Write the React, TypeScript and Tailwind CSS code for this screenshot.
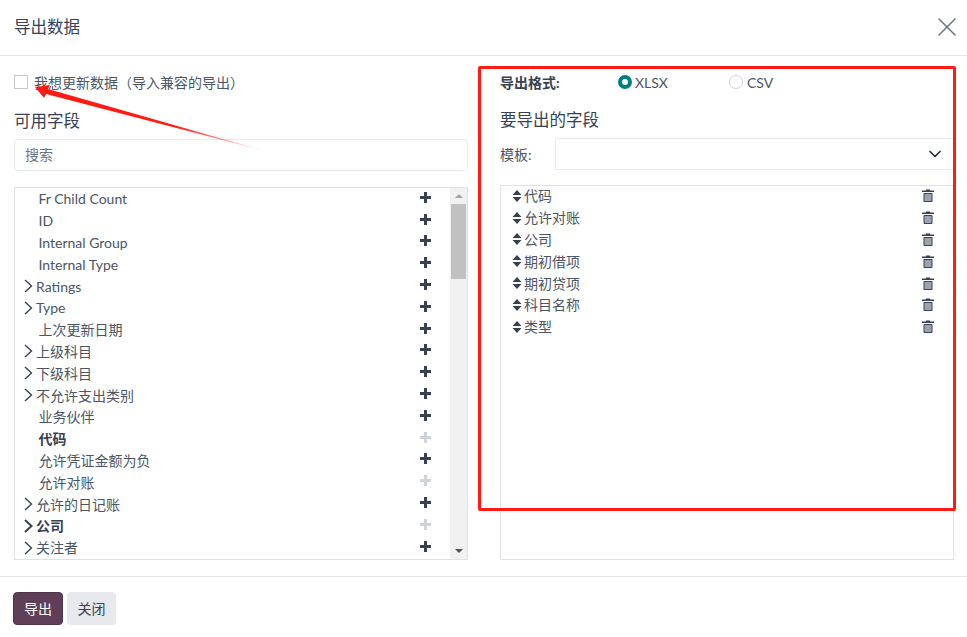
import { ChevronDown, X } from 'lucide-react'

const available = [
  { name: 'Fr Child Count' },
  { name: 'ID' },
  { name: 'Internal Group' },
  { name: 'Internal Type' },
  { name: 'Ratings', expand: true },
  { name: 'Type', expand: true },
  { name: '上次更新日期' },
  { name: '上级科目', expand: true },
  { name: '下级科目', expand: true },
  { name: '不允许支出类别', expand: true },
  { name: '业务伙伴' },
  { name: '代码', bold: true, added: true },
  { name: '允许凭证金额为负' },
  { name: '允许对账', added: true },
  { name: '允许的日记账', expand: true },
  { name: '公司', expand: true, bold: true, added: true },
  { name: '关注者', expand: true },
]

const selected = ['代码', '允许对账', '公司', '期初借项', '期初贷项', '科目名称', '类型']

function PlusIcon({ muted }: { muted?: boolean }) {
  return (
    <svg width="11" height="11" viewBox="0 0 11 11" className={`-mt-[3px] ${muted ? 'text-[#ced4da]' : 'text-[#374151]'}`}>
      <path d="M4 0h3v4h4v3H7v4H4V7H0V4h4z" fill="currentColor" />
    </svg>
  )
}

function SortIcon() {
  return (
    <svg width="10" height="12" viewBox="0 0 10 12" className="text-[#374151] shrink-0">
      <path d="M5 0l4.5 5H.5zM5 12L.5 7h9z" fill="currentColor" />
    </svg>
  )
}

function TrashIcon() {
  return (
    <svg width="12" height="13" viewBox="0 0 12 13" className="text-[#374151]">
      <path d="M4 1.5V.5h4v1h4V3H0V1.5z" fill="currentColor" />
      <path d="M2 4.5h8v8H2z" fill="#9ca3af" stroke="currentColor" />
    </svg>
  )
}

function Caret({ bold }: { bold?: boolean }) {
  return (
    <svg width="9" height="14" viewBox="0 0 9 14" fill="none" stroke="currentColor" strokeWidth={bold ? 2 : 1.4} className="text-[#374151]">
      <path d="M1 1l6.5 6L1 13" />
    </svg>
  )
}

export default function App() {
  return (
    <div className="relative w-[967px] h-[637px] bg-white overflow-hidden text-[14px] text-[#4b5563] font-['Lato','Noto_Sans_CJK_SC',sans-serif]">
      {/* Header */}
      <div className="h-[56px] flex items-center justify-between pl-[14px] pr-[4px] border-b border-[#e5e7eb]">
        <h4 className="text-[16.5px] text-[#374151]">导出数据</h4>
        <X className="w-[32px] h-[32px] -mt-[2px] text-[#6b7280]" strokeWidth={1.1} />
      </div>

      {/* Body */}
      <div className="h-[520px] grid grid-cols-[454px_454px] gap-x-[32px] pl-[14px]">
        {/* Left column */}
        <div className="flex flex-col">
          <label className="mt-[15px] h-[22px] flex items-center gap-[6px]">
            <span className="w-[14px] h-[14px] border border-[#c4c8cf] bg-white" />
            <span>我想更新数据（导入兼容的导出）</span>
          </label>
          <div className="mt-[16px] h-[24px] leading-[24px] text-[16.5px] text-[#374151]">可用字段</div>
          <div className="mt-[6px] h-[32px] flex items-center px-[10px] pb-[1px] border border-[#e9ecef] rounded-[4px] text-[#6b7280]">搜索</div>
          <div className="mt-[16px] h-[373px] flex border border-[#dee2e6] overflow-hidden">
            <div className="flex-1">
              {available.map((item) => (
                <div key={item.name} className="h-[21.8px] flex items-center pl-[9px] pr-[19px]">
                  <span className="w-[12px] shrink-0 flex">
                    {item.expand && <Caret bold={item.bold} />}
                  </span>
                  <span className={`flex-1 ${item.expand ? '' : 'pl-[2.5px]'} ${item.bold ? 'font-bold text-[#374151]' : ''}`}>{item.name}</span>
                  <PlusIcon muted={item.added} />
                </div>
              ))}
            </div>
            <div className="w-[17px] bg-[#f1f1f1] flex flex-col items-center justify-between">
              <div className="w-full flex flex-col items-center">
                <div className="h-[16px] flex items-center">
                  <div className="w-0 h-0 border-x-[4px] border-x-transparent border-b-[4px] border-b-[#a3a3a3]" />
                </div>
                <div className="w-full h-[75px] px-px"><div className="w-full h-full bg-[#c1c1c1]" /></div>
              </div>
              <div className="h-[17px] flex items-center">
                <div className="w-0 h-0 border-x-[4px] border-x-transparent border-t-[4px] border-t-[#505050]" />
              </div>
            </div>
          </div>
        </div>

        {/* Right column */}
        <div className="flex flex-col">
          <div className="mt-[15px] h-[22px] flex items-center">
            <span className="w-[118px] font-bold text-[#374151]">导出格式:</span>
            <span className="w-[14px] h-[14px] rounded-full border-[4px] border-[#017e84] bg-white" />
            <span className="ml-[3px] w-[94px]">XLSX</span>
            <span className="w-[14px] h-[14px] rounded-full border border-[#ced4da] bg-white" />
            <span className="ml-[4px]">CSV</span>
          </div>
          <div className="mt-[15px] h-[24px] leading-[24px] text-[16.5px] text-[#374151]">要导出的字段</div>
          <div className="mt-[6px] h-[32px] flex items-center">
            <span className="w-[55px]">模板:</span>
            <div className="flex-1 h-full flex items-center justify-end pr-[8px] border border-[#e9ecef] rounded-l-[2px]">
              <ChevronDown className="w-[20px] h-[20px] text-[#1f2937]" strokeWidth={2} />
            </div>
          </div>
          <div className="mt-[15px] h-[375px] border border-[#dee2e6]">
            {selected.map((name) => (
              <div key={name} className="h-[21.8px] -mt-px mb-px flex items-center pl-[11px] pr-[19px]">
                <SortIcon />
                <span className="flex-1 ml-[2px]">{name}</span>
                <TrashIcon />
              </div>
            ))}
          </div>
        </div>
      </div>

      {/* Footer */}
      <div className="h-[61px] flex items-start gap-[4px] pl-[13px] pt-[15px] border-t border-[#e5e7eb]">
        <button className="h-[33px] w-[50px] rounded-[4px] bg-[#5f3f58] text-white border border-[#4f3349]">导出</button>
        <button className="h-[33px] w-[49px] rounded-[4px] bg-[#e7e9ed] text-[#374151]">关闭</button>
      </div>

      {/* Red annotations over the screenshot */}
      <div className="absolute left-[478px] top-[66px] w-[478px] h-[445px] border-[3px] border-[#ff1a13] rounded-[2px] pointer-events-none" />
      <svg className="absolute left-0 top-0 pointer-events-none" width="300" height="170">
        <defs>
          <linearGradient id="tail" x1="35" y1="87" x2="265" y2="151" gradientUnits="userSpaceOnUse">
            <stop offset="0.6" stopColor="#ff1a13" />
            <stop offset="1" stopColor="#ff1a13" stopOpacity="0.1" />
          </linearGradient>
        </defs>
        <path d="M35 87L50 85L48 89L265 151L46 94L44 98z" fill="url(#tail)" />
      </svg>
    </div>
  )
}
